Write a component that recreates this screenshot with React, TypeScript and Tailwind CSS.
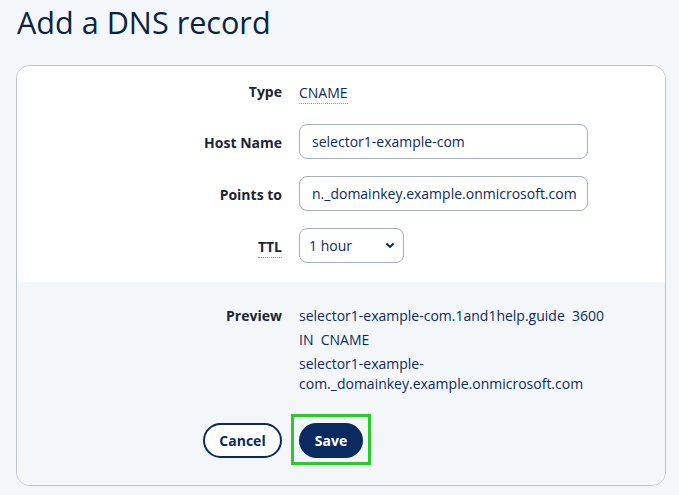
import React from "react";

export default function App() {
  const font = { fontFamily: '"Open Sans", "Noto Sans", sans-serif' };
  return (
    <div className="w-[679px] h-[495px] bg-[#f4f7fa] overflow-hidden" style={font}>
      <h1 className="pl-[17px] pt-[2px] h-[65px] text-[30.6px] leading-[40px] font-medium text-[#0b2341]">
        Add a DNS record
      </h1>
      <div className="mx-[16px] w-[650px] border border-[#b9c4d0] rounded-[14px] overflow-hidden">
        <div className="bg-white pt-[10px] pb-[19px] flex flex-col gap-[17px]">
          <div className="flex items-center h-[31px]">
            <div className="w-[265px] text-right text-[14px] font-bold text-[#1c2533]">Type</div>
            <div className="ml-[17px]">
              <span className="text-[14px] text-[#0b2a5b] border-b border-dotted border-[#8c99a8] pb-[1px]">CNAME</span>
            </div>
          </div>
          <div className="flex items-center h-[35px]">
            <div className="w-[265px] text-right text-[14px] font-bold text-[#1c2533] pt-[1px]">Host Name</div>
            <div className="ml-[17px] w-[289px] h-[35px] border border-[#a3afbd] rounded-[8px] flex items-center px-[12px] text-[14px] text-[#0b2a5b]">
              selector1-example-com
            </div>
          </div>
          <div className="flex items-center h-[35px]">
            <div className="w-[265px] text-right text-[14px] font-bold text-[#1c2533] pt-[1px]">Points to</div>
            <div className="ml-[17px] w-[289px] h-[35px] border border-[#a3afbd] rounded-[8px] flex items-center px-[12px] text-[14px] text-[#0b2a5b] overflow-hidden whitespace-nowrap">
              n._domainkey.example.onmicrosoft.com
            </div>
          </div>
          <div className="flex items-center h-[35px]">
            <div className="w-[265px] text-right">
              <span className="text-[14px] font-bold text-[#1c2533] border-b border-dotted border-[#8c99a8] pb-[1px]">TTL</span>
            </div>
            <div className="ml-[17px] w-[105px] h-[35px] border border-[#a3afbd] rounded-[8px] flex items-center justify-between pl-[9px] pr-[8px] text-[14px] text-[#0b2a5b]">
              <span>1 hour</span>
              <svg width="10" height="7" viewBox="0 0 10 7">
                <path d="M1.5 1.5 L5 5 L8.5 1.5" fill="none" stroke="#0b2341" strokeWidth="1.8" />
              </svg>
            </div>
          </div>
        </div>
        <div className="bg-[#f4f7fa] pt-[24px] pb-[27px]">
          <div className="flex">
            <div className="w-[265px] text-right text-[14px] font-bold text-[#1c2533] leading-[20px]">Preview</div>
            <div className="ml-[17px] w-[320px] text-[14px] leading-[20px] text-[#0b2a5b] flex flex-col gap-[4px]">
              <div>selector1-example-com.1and1help.guide&nbsp;&nbsp;3600</div>
              <div>IN&nbsp;&nbsp;CNAME</div>
              <div>
                selector1-example-
                <br />
                com._domainkey.example.onmicrosoft.com
              </div>
            </div>
          </div>
          <div className="flex mt-[29px]">
            <div className="w-[265px] flex justify-end">
              <button className="w-[79px] h-[35px] rounded-full border-2 border-[#0b2a5f] bg-white text-[14px] font-bold text-[#0b2a5f]">
                Cancel
              </button>
            </div>
            <div className="ml-[17px] relative">
              <span className="absolute left-[-8px] right-[-8px] top-[-9px] bottom-[-7px] border-[3px] border-[#2ec72e]" />
              <button className="relative w-[64px] h-[35px] rounded-full bg-[#0b2a5f] text-[14px] font-bold text-white">
                Save
              </button>
            </div>
          </div>
        </div>
      </div>
    </div>
  );
}
